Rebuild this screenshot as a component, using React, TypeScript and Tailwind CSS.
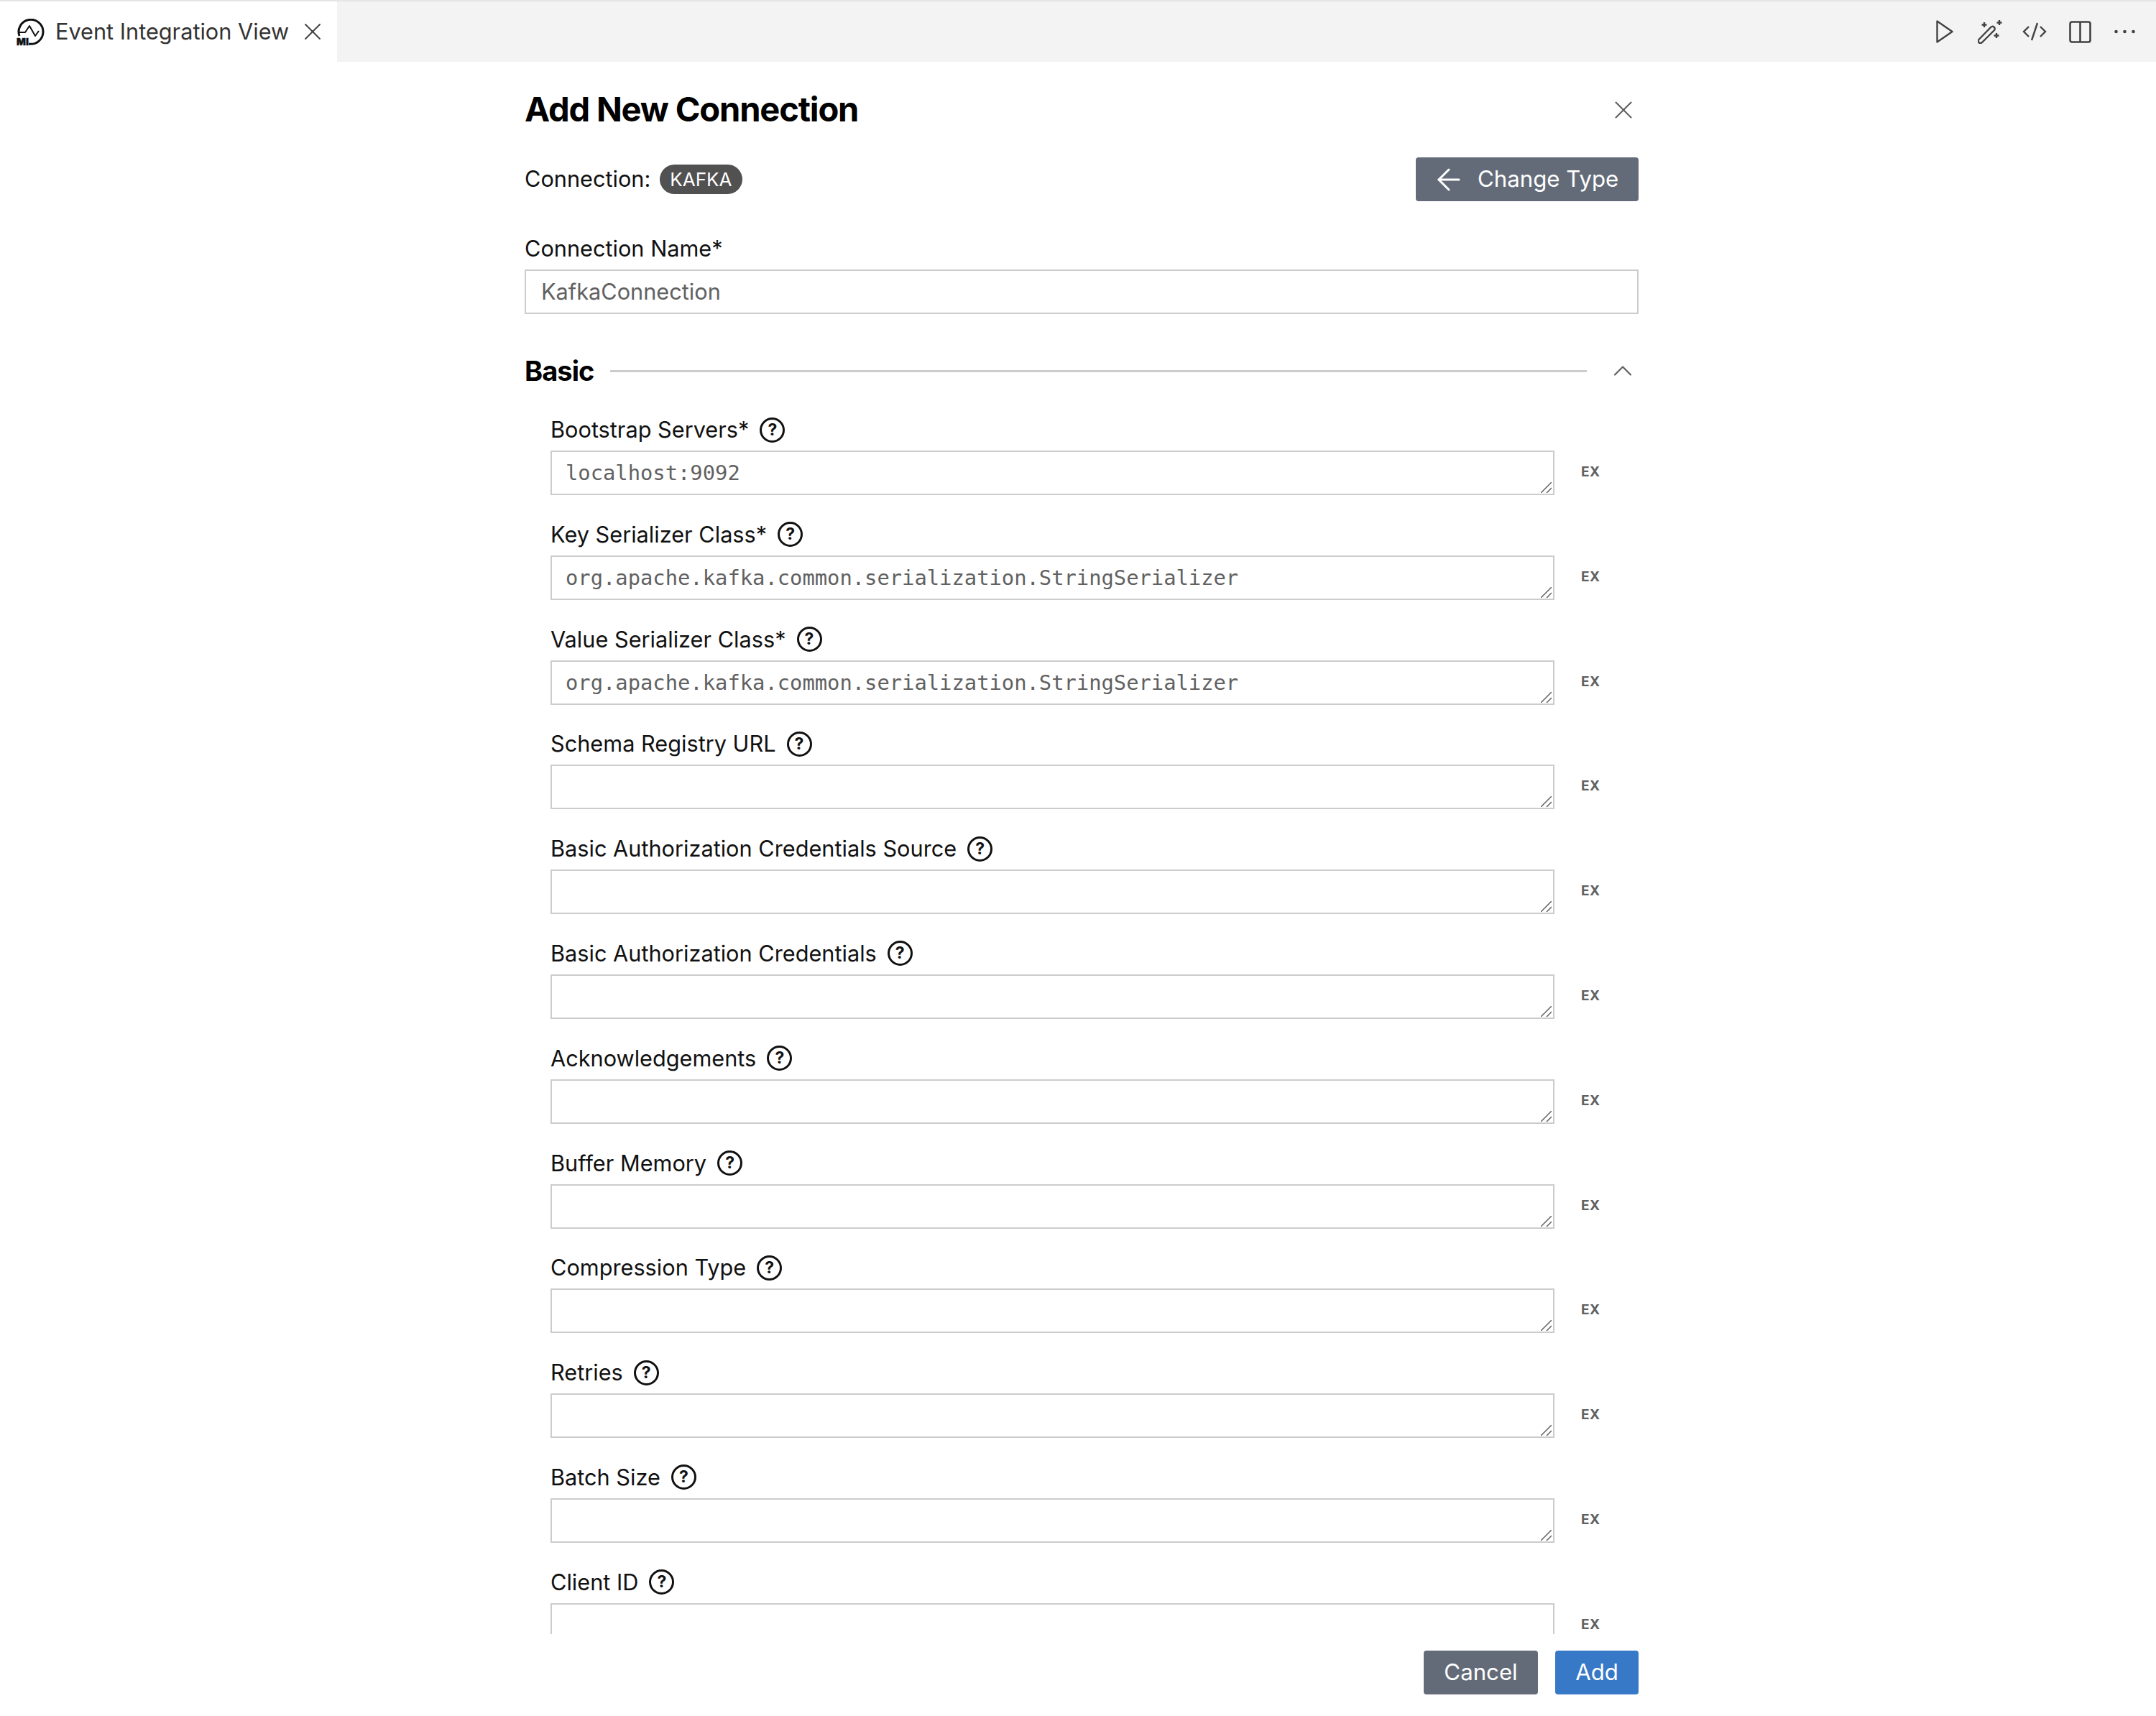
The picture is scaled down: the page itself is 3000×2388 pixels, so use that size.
import { ArrowLeft, ChevronUp, X } from "lucide-react";

const FIELDS = [
  { label: "Bootstrap Servers*", value: "localhost:9092" },
  { label: "Key Serializer Class*", value: "org.apache.kafka.common.serialization.StringSerializer" },
  { label: "Value Serializer Class*", value: "org.apache.kafka.common.serialization.StringSerializer" },
  { label: "Schema Registry URL", value: "" },
  { label: "Basic Authorization Credentials Source", value: "" },
  { label: "Basic Authorization Credentials", value: "" },
  { label: "Acknowledgements", value: "" },
  { label: "Buffer Memory", value: "" },
  { label: "Compression Type", value: "" },
  { label: "Retries", value: "" },
  { label: "Batch Size", value: "" },
  { label: "Client ID", value: "" },
];

function MiLogo() {
  return (
    <svg width="40" height="44" viewBox="0 0 40 44" fill="none" className="mt-[8px]">
      <path d="M5 24 A17 17 0 1 1 18 35" stroke="#111" strokeWidth="3" />
      <path d="M5 19 H13 L19 10 L27 24 L32 17" stroke="#111" strokeWidth="2" strokeLinejoin="round" />
      <text x="1" y="37" fontSize="13.500" fontWeight="900" fill="#111" stroke="#111" strokeWidth="0.4" fontFamily="Inter, sans-serif">MI</text>
    </svg>
  );
}

function ToolbarIcons() {
  return (
    <div className="flex items-center text-[#424242]">
      <svg width="24" height="32" viewBox="0 0 24 32" fill="none" stroke="currentColor" strokeWidth="2.4" strokeLinejoin="round" className="mr-[34px]">
        <path d="M1.500 1.500 L22.500 16 L1.500 30.500 Z" />
      </svg>
      <svg width="34" height="33" viewBox="0 0 34 33" fill="none" stroke="currentColor" strokeWidth="2.4" className="mr-[28px]">
        <path d="M1.500 27 L18 10 a3 3 0 0 1 5 4 L6 31 a3 3 0 0 1 -4.500 -4 Z" />
        <path d="M9 3 v7 M5.500 6.500 h7 M30 0 v7 M26.500 3.500 h7 M26 18 v7 M22.500 21.500 h7" />
      </svg>
      <svg width="34" height="26" viewBox="0 0 34 26" fill="none" stroke="currentColor" strokeWidth="2.4" className="mr-[31px]">
        <path d="M9 6 L2 13 L9 20 M25 6 L32 13 L25 20 M21 1 L13 25" />
      </svg>
      <svg width="31" height="31" viewBox="0 0 31 31" fill="none" stroke="currentColor" strokeWidth="2.6" className="mr-[32px]">
        <rect x="1.500" y="1.500" width="28" height="28" rx="2.500" />
        <path d="M15.500 1.500 V29.500" />
      </svg>
      <svg width="29" height="6" viewBox="0 0 29 6" fill="currentColor">
        <circle cx="2.500" cy="3" r="2.300" />
        <circle cx="14.500" cy="3" r="2.300" />
        <circle cx="26.500" cy="3" r="2.300" />
      </svg>
    </div>
  );
}

function HelpIcon() {
  return (
    <span className="flex h-[35px] w-[35px] items-center justify-center rounded-full border-[3px] border-[#111] text-[23px] font-bold leading-none text-[#111]">
      ?
    </span>
  );
}

function ParamRow({ label, value }: { label: string; value: string }) {
  return (
    <div className="flex h-[145.8px] shrink-0 items-start">
      <div className="w-[1397px]">
        <div className="flex h-[58px] items-center gap-[15px] text-[30.7px] text-[#111]">
          <span>{label}</span>
          <HelpIcon />
        </div>
        <div className="relative">
          <textarea
            readOnly
            value={value}
            className="block h-[62px] w-[1397px] resize-none overflow-hidden border-2 border-[#cccccc] bg-white px-[19px] py-[10px] font-['DejaVu_Sans_Mono',monospace] text-[28.8px] leading-[38px] text-[#616161] outline-none"
          />
          {/* resize grip */}
          <svg width="15" height="15" viewBox="0 0 15 15" stroke="#616161" strokeWidth="1.5" className="absolute bottom-[3px] right-[4px]">
            <path d="M0 15 L15 0 M8 15 L15 8" />
          </svg>
        </div>
      </div>
      <span className="ml-[37px] mt-[76px] text-[19px] font-bold leading-[23px] tracking-wide text-[#616161]">EX</span>
    </div>
  );
}

export default function App() {
  return (
    <div className="flex h-[2388px] w-[3000px] flex-col overflow-hidden bg-white font-['Inter',sans-serif]">
      <div className="flex h-[86px] shrink-0 items-center justify-between border-t-2 border-[#e5e5e5] bg-[#f3f3f3] pr-[29px]">
        <div className="flex h-full w-[469px] items-center bg-white pl-[22px]">
          <MiLogo />
          <span className="ml-[15px] text-[30.7px] text-[#333333]">Event Integration View</span>
          <X size={40} strokeWidth={1.2} className="ml-[13px] text-[#424242]" />
        </div>
        <ToolbarIcons />
      </div>

      <div className="ml-[730px] flex w-[1550px] flex-1 flex-col overflow-hidden">
        <div className="flex h-[133px] shrink-0 items-center justify-between">
          <h1 className="text-[47.1px] font-bold tracking-tight text-black">Add New Connection</h1>
          <X size={42} strokeWidth={1.2} className="text-[#616161]" />
        </div>

        <div className="flex h-[61px] shrink-0 items-center justify-between">
          <div className="flex items-center gap-[13px] text-[30.7px] text-[#111]">
            <span>Connection:</span>
            <span className="flex h-[41px] items-center rounded-full bg-[#515151] px-[14px] text-[26px] text-white">KAFKA</span>
          </div>
          <button className="flex h-[61px] w-[310px] items-center gap-[16px] rounded-[4px] bg-[#636b79] pl-[22px] text-[31.2px] text-white">
            <ArrowLeft size={48} strokeWidth={1.5} />
            Change Type
          </button>
        </div>

        <label className="mb-[7px] mt-[44px] block h-[44px] text-[30.7px] leading-[44px] text-[#111]">Connection Name*</label>
        <div className="flex h-[62px] shrink-0 items-center border-2 border-[#cccccc] px-[21px] text-[30.7px] text-[#616161]">
          KafkaConnection
        </div>

        <div className="mt-[54px] flex h-[50px] shrink-0 items-center">
          <span className="text-[38px] font-bold tracking-tight text-black">Basic</span>
          <div className="ml-[23px] h-[3px] flex-1 bg-[#cccccc]" />
          <ChevronUp size={44} strokeWidth={1.2} className="ml-[28px] text-[#616161]" />
        </div>

        <div className="mt-[28px] flex h-[1705px] shrink-0 flex-col overflow-hidden pl-[36px]">
          {FIELDS.map((f) => (
            <ParamRow key={f.label} label={f.label} value={f.value} />
          ))}
        </div>

        <div className="mt-[23px] flex shrink-0 justify-end gap-[24px]">
          <button className="h-[61px] w-[159px] rounded-[4px] bg-[#636b79] text-[31.2px] text-white">Cancel</button>
          <button className="h-[61px] w-[116px] rounded-[4px] bg-[#3778c7] text-[31.2px] text-white">Add</button>
        </div>
      </div>
    </div>
  );
}
